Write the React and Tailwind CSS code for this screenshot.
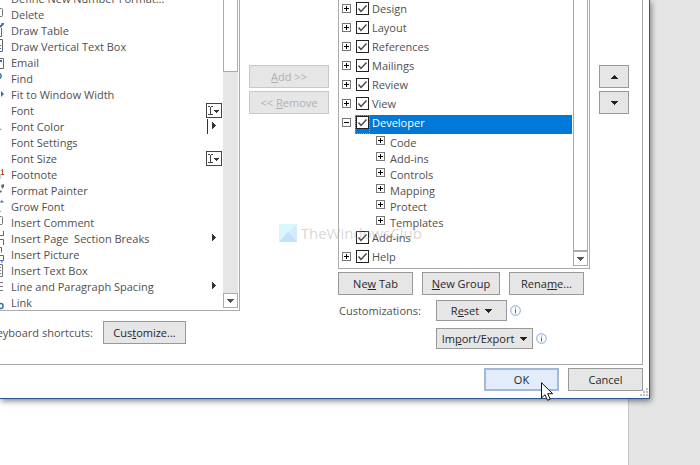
import React, { useState } from 'react';
import clsx from 'clsx';

const commands = [
    { name: 'Define New Number Format...' },
    { name: 'Delete', icon: 'comment' },
    { name: 'Draw Table', icon: 'pen' },
    { name: 'Draw Vertical Text Box', icon: 'textbox' },
    { name: 'Email', icon: 'mail' },
    { name: 'Find', icon: 'lens' },
    { name: 'Fit to Window Width', icon: 'arrow' },
    { name: 'Font', type: 'combo' },
    { name: 'Font Color', type: 'split', icon: 'letter' },
    { name: 'Font Settings' },
    { name: 'Font Size', type: 'combo' },
    { name: 'Footnote', icon: 'footnote' },
    { name: 'Format Painter', icon: 'brush' },
    { name: 'Grow Font', icon: 'grow' },
    { name: 'Insert Comment', icon: 'comment' },
    { name: 'Insert Page  Section Breaks', type: 'menu', icon: 'breaks' },
    { name: 'Insert Picture', icon: 'picture' },
    { name: 'Insert Text Box', icon: 'lines' },
    { name: 'Line and Paragraph Spacing', type: 'menu', icon: 'spacing' },
    { name: 'Link', icon: 'link' },
];

const tabs = [
    { name: 'Design' },
    { name: 'Layout' },
    { name: 'References' },
    { name: 'Mailings' },
    { name: 'Review' },
    { name: 'View' },
    { name: 'Developer', groups: ['Code', 'Add-ins', 'Controls', 'Mapping', 'Protect', 'Templates'] },
    { name: 'Add-ins', leaf: true },
    { name: 'Help' },
];

const iconShapes = {
    comment: <path d="M0 1.500h1.500q1 0 1 1v6q0 1-1 1H0" stroke="#777" />,
    pen: (
        <>
            <path d="M0 4l3-3M1.500 0.500h2.500" stroke="#3b6fb0" strokeWidth="2" />
            <path d="M1.500 5v8.500H0" stroke="#666" />
        </>
    ),
    textbox: (
        <>
            <path d="M0 0.500h2.500v12H0" stroke="#666" />
            <path d="M0 6.500h1M0 9.500h1" stroke="#3b6fb0" />
        </>
    ),
    mail: (
        <>
            <path d="M0 3.500h3.500v10H0" stroke="#666" />
            <path d="M0 6h2" stroke="#3b6fb0" strokeWidth="2" />
        </>
    ),
    lens: <path d="M0 2.500q1.500 1 1 3.500L0 7.500" stroke="#3b6fb0" strokeWidth="1.500" />,
    arrow: <path d="M1 4l3 3-3 3z" fill="#3b6fb0" />,
    letter: <path d="M0 9.500l1 1.500" stroke="#777" />,
    footnote: (
        <>
            <path d="M1 3.500l1.500-1v5M1 7.500h3" stroke="#d24726" />
            <path d="M0 7v5" stroke="#999" />
        </>
    ),
    brush: (
        <>
            <path d="M1 2l3-1v3l-2 2z" fill="#666" />
            <path d="M0 8l1.500 1" stroke="#666" strokeWidth="2" />
        </>
    ),
    grow: (
        <>
            <path d="M0 3.500L1.500 1 4 3.500z" fill="#3b6fb0" />
            <path d="M0 12.500h1" stroke="#999" />
        </>
    ),
    breaks: <path d="M3.500 0v4.500H0M0 8.500h3.500V14" stroke="#666" />,
    picture: (
        <>
            <path d="M0 0.500h1.500v5" stroke="#666" />
            <path d="M0 8.500h3.500v5H0M2 14v2" stroke="#3b6fb0" />
        </>
    ),
    lines: <path d="M0 1.500h2.500v12H0M0 4.500h1M0 7.500h1M0 10.500h1" stroke="#777" />,
    spacing: <path d="M0 3.500h3M0 7.500h3M0 11.500h3" stroke="#777" />,
    link: <path d="M0 8.500h1q2 0 2 2.500t-2 2.500H0" stroke="#3b6fb0" strokeWidth="1.500" />,
};

const CommandIcon = ({ name }) => (
    <svg width="5" height="16" viewBox="0 0 5 16" fill="none" className="shrink-0">
        {iconShapes[name]}
    </svg>
);

const TypeMark = ({ type }) => (
    <svg width="17" height="16" viewBox="0 0 17 16" fill="none" className="shrink-0" shapeRendering="crispEdges">
        {type === 'combo' && (
            <>
                <rect x="0.500" y="0.500" width="15" height="14" rx="1" stroke="#444" />
                <path d="M2 3.500h2M5 3.500h2M4.500 4v8M2 11.500h2M5 11.500h2" stroke="#444" />
                <path d="M8 7h5v1h-1v1h-1v1h-1V9H9V8H8z" fill="#333" />
            </>
        )}
        {type === 'split' && <path d="M1.500 0v15" stroke="#333" />}
        {(type === 'split' || type === 'menu') && <path d="M6 3h1v1h1v1h1v1h1v1H9v1H8v1H7v1H6z" fill="#333" />}
    </svg>
);

const Caret = ({ up, color = '#222' }) => (
    <svg width="7" height="4" viewBox="0 0 7 4" className={clsx('shrink-0', up && 'rotate-180')} shapeRendering="crispEdges">
        <path d="M0 0h7v1H6v1H5v1H4v1H3V3H2V2H1V1H0z" fill={color} />
    </svg>
);

const ScrollBar = ({ thumb }) => (
    <div className="w-[15px] shrink-0 flex flex-col bg-[#e6e6e6]">
        <div className={clsx('border border-t-0 border-[#ababab] bg-white', thumb)} />
        <div className="mt-auto h-[15px] border border-[#ababab] bg-white flex items-center justify-center">
            <Caret color="#555" />
        </div>
    </div>
);

const Button = ({ className, children, ...props }) => (
    <button
        className={clsx(
            'border flex items-center justify-center whitespace-pre',
            props.disabled ? 'border-[#c8c8c8] bg-[#e6e6e6] text-[#b0b0b0]' : 'border-[#999] bg-[#e6e6e6] text-[#262626]',
            className
        )}
        {...props}
    >
        {children}
    </button>
);

const Expander = ({ open, label }) => (
    <button aria-label={label} className="block shrink-0 size-[9px]">
        <svg width="9" height="9" viewBox="0 0 9 9" fill="none" className="block" shapeRendering="crispEdges">
            <rect x="0.500" y="0.500" width="8" height="8" fill="#fff" stroke="#777" />
            <path d={open ? 'M2 4.500h5' : 'M2 4.500h5M4.500 2v5'} stroke="#000" />
        </svg>
    </button>
);

const InfoIcon = () => (
    <svg width="11" height="11" viewBox="0 0 11 11" fill="none" className="shrink-0">
        <circle cx="5.500" cy="5.500" r="4.800" stroke="#7ea6d8" />
        <path d="M5.500 2.500v1M5.500 4.500v4" stroke="#3b6fb0" />
    </svg>
);

const TabRow = ({ tab, selected }) => {
    const [checked, setChecked] = useState(true);

    return (
        <li>
            <div className="h-[19px] flex items-start pl-[3px] pr-px">
                <div className="w-[13px] pt-[3px]">
                    {!tab.leaf && <Expander open={!!tab.groups} label={`Expand ${tab.name}`} />}
                </div>
                <label className={clsx('flex-1 flex items-start h-[19px]', selected && 'bg-[#0078d7] text-white')}>
                    <span className={clsx('grid px-px h-[19px]', selected && 'outline-1 outline-dotted -outline-offset-1 outline-[#f08733]')}>
                        <input
                            type="checkbox"
                            checked={checked}
                            onChange={(e) => setChecked(e.target.checked)}
                            className="appearance-none col-start-1 row-start-1 mt-px size-[13px] border border-[#222] bg-white"
                        />
                        {checked && (
                            <svg width="13" height="13" viewBox="0 0 13 13" fill="none" className="col-start-1 row-start-1 mt-px pointer-events-none">
                                <path d="M2.500 6.500l2.500 3 5.500-6" stroke="#444" strokeWidth="1.400" />
                            </svg>
                        )}
                    </span>
                    <span className="pl-[2px] leading-4">{tab.name}</span>
                </label>
            </div>
            {tab.groups && (
                <ul>
                    {tab.groups.map((group) => (
                        <li key={group} className="h-4 pl-[37px] pt-px flex items-start gap-[5px]">
                            <div className="pt-px">
                                <Expander label={`Expand ${group}`} />
                            </div>
                            <span className="leading-4">{group}</span>
                        </li>
                    ))}
                </ul>
            )}
        </li>
    );
};

const App = () => {
    return (
        <div className="relative min-h-screen overflow-hidden bg-[#e5e5e5] pr-[50px] text-[11px] leading-4 text-[#505050] font-['Open_Sans','Noto_Sans',sans-serif]">
            {/* Document page behind the dialog */}
            <div className="absolute inset-y-0 left-0 right-[71px] bg-white border-r border-[#c6c6c6]" />

            <div className="relative bg-white border-r border-b border-[#2b579a] shadow-[1px_2px_6px_0px_rgba(0,0,0,0.5)]">
                <div className="mr-[6px] flex border-r border-b border-[#ababab]">
                    {/* Commands */}
                    <div className="flex-1 min-w-0 pb-5">
                        <div className="h-[311px] flex overflow-hidden border-r border-b border-[#ababab]">
                            <ul className="flex-1 min-w-0 -mt-[9px]">
                                {commands.map((command) => (
                                    <li key={command.name} className="h-4 flex items-center gap-[6px] whitespace-pre">
                                        <CommandIcon name={command.icon} />
                                        <span className="flex-1 min-w-0">{command.name}</span>
                                        <TypeMark type={command.type} />
                                    </li>
                                ))}
                            </ul>
                            <div className="flex pb-[2px] pr-px bg-white">
                                <ScrollBar thumb="h-[72px]" />
                            </div>
                        </div>
                        <div className="mt-[10px] flex items-center gap-[10px]">
                            <div className="w-[93px] flex justify-end overflow-hidden whitespace-nowrap">Keyboard shortcuts:</div>
                            <Button className="w-[83px] h-[23px]"><span>Cus<u>t</u>omize...</span></Button>
                        </div>
                    </div>

                    <div className="w-[98px] shrink-0 px-[9px] pt-[65px] flex flex-col gap-[3px]">
                        <Button disabled className="h-[23px]"><span><u>A</u>dd &gt;&gt;</span></Button>
                        <Button disabled className="h-[23px]"><span>&lt;&lt; <u>R</u>emove</span></Button>
                    </div>

                    {/* Ribbon tabs */}
                    <div className="w-[252px] shrink-0 pb-[15px]">
                        <div className="flex border border-t-0 border-[#ababab] h-[269px]">
                            <ul className="flex-1 pt-px">
                                {tabs.map((tab) => (
                                    <TabRow key={tab.name} tab={tab} selected={tab.name === 'Developer'} />
                                ))}
                            </ul>
                            <div className="flex pb-[2px] pr-px">
                                <ScrollBar thumb="h-[251px]" />
                            </div>
                        </div>
                        <div className="mt-[3px] flex gap-[9px]">
                            <Button className="w-[75px] h-[23px]"><span>Ne<u>w</u> Tab</span></Button>
                            <Button className="w-[78px] h-[23px]"><span><u>N</u>ew Group</span></Button>
                            <Button className="w-[75px] h-[23px]"><span>Rena<u>m</u>e...</span></Button>
                        </div>
                        <div className="mt-[5px] flex">
                            <div className="w-[98px] pl-px pt-[3px]">Customizations:</div>
                            <div className="flex flex-col gap-[7px]">
                                <div className="flex items-center gap-[3px]">
                                    <Button className="w-[71px] h-[21px] gap-[6px]"><span>R<u>e</u>set</span><Caret /></Button>
                                    <InfoIcon />
                                </div>
                                <div className="flex items-center gap-[3px]">
                                    <Button className="w-[97px] h-[21px] gap-[6px]"><span>Im<u>p</u>ort/Export</span><Caret /></Button>
                                    <InfoIcon />
                                </div>
                            </div>
                        </div>
                    </div>

                    <div className="shrink-0 pl-[9px] pr-[13px] pt-[65px] flex flex-col gap-[3px]">
                        <Button aria-label="Move up" className="w-[30px] h-[23px]"><Caret up /></Button>
                        <Button aria-label="Move down" className="w-[30px] h-[23px]"><Caret /></Button>
                    </div>
                </div>

                <div className="flex justify-end gap-[9px] pt-[3px] pb-[7px] pr-[6px]">
                    <button className="w-[75px] h-[23px] border-2 border-[#a2b8d4] bg-[#e3ecfb] text-[#262626] flex items-center justify-center">OK</button>
                    <Button className="w-[75px] h-[23px]">Cancel</Button>
                </div>

                {/* Resize grip */}
                <svg width="8" height="8" viewBox="0 0 8 8" className="absolute right-px bottom-[2px]" shapeRendering="crispEdges">
                    <path d="M6 0h2v2H6zM3 3h2v2H3zM6 3h2v2H6zM0 6h2v2H0zM3 6h2v2H3zM6 6h2v2H6z" fill="#bfbfbf" />
                </svg>

                {/* Pointer */}
                <svg width="13" height="20" viewBox="0 0 13 20" className="absolute right-[95px] -bottom-[4px]">
                    <path d="M0.500 0.700v15.300l3.500-3.300 2.500 5.600 2.700-1.200-2.500-5.400h5z" fill="#fff" stroke="#111" />
                </svg>
            </div>

            {/* Watermark */}
            <div className="absolute top-[223px] right-[278px] flex items-center gap-1 text-[15px] leading-5 text-[#999]/40 pointer-events-none">
                <svg width="18" height="18" viewBox="0 0 18 18">
                    <path d="M0 0h18v18H0z" fill="#d3ecfc" />
                    <path d="M0 0h18L0 18z" fill="#d9f8fd" />
                    <path d="M0 18L9 8l9 10z" fill="#c5defa" />
                </svg>
                <span>TheWindowsClub</span>
            </div>
        </div>
    );
};

export default App;
